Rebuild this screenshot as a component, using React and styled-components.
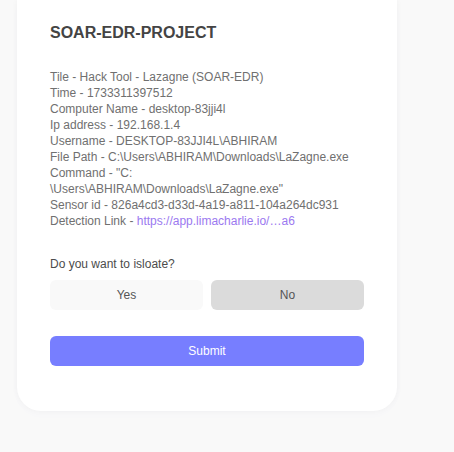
import React, { useState } from "react";
import styled, { createGlobalStyle } from "styled-components";

const GlobalStyle = createGlobalStyle`
  * { box-sizing: border-box; }
  body {
    margin: 0;
    background: #f9f9f9;
    font-family: "Liberation Sans", Arial, sans-serif;
  }
`;

const Page = styled.main`
  padding: 0 57px 41px 17px;
`;

const Card = styled.form`
  max-width: 448px;
  padding: 23px 33px 45px;
  background: #ffffff;
  border-radius: 0 0 24px 24px;
  box-shadow: 0 4px 16px rgba(99, 77, 255, 0.01), 0 0 6px rgba(0, 0, 0, 0.04);
`;

const Title = styled.h1`
  margin: 0 0 26px;
  font-size: 16px;
  line-height: 20px;
  color: #444444;
`;

const Details = styled.div`
  font-size: 12px;
  line-height: 16px;
  color: #707070;
`;

const Detail = styled.p`
  margin: 0;
`;

const DetailLink = styled.a`
  color: #9b79f0;
  text-decoration: none;
`;

const Choice = styled.fieldset`
  min-width: 0;
  margin: 27px 0 26px;
  padding: 0;
  border: 0;
`;

const Question = styled.legend`
  padding: 0;
  margin-bottom: 8px;
  font-size: 12px;
  line-height: 16px;
  color: #4c4c4c;
`;

const Options = styled.div`
  display: grid;
  grid-template-columns: 1fr 1fr;
  gap: 8px;
`;

const Button = styled.button`
  height: 30px;
  padding: 0;
  border: 0;
  border-radius: 6px;
  font: inherit;
  font-size: 12px;
  line-height: 16px;
  cursor: pointer;
`;

const OptionButton = styled(Button)`
  color: #555555;
  background: ${({ $selected }) => ($selected ? "#dbdbdb" : "#f9f9f9")};
`;

const SubmitButton = styled(Button)`
  display: block;
  width: 100%;
  color: #ffffff;
  background: #777eff;
`;

const details = [
  "Tile - Hack Tool - Lazagne (SOAR-EDR)",
  "Time - 1733311397512",
  "Computer Name - desktop-83jji4l",
  "Ip address - 192.168.1.4",
  "Username - DESKTOP-83JJI4L\\ABHIRAM",
  "File Path - C:\\Users\\ABHIRAM\\Downloads\\LaZagne.exe",
  'Command - "C:\u200b\\Users\\ABHIRAM\\Downloads\\LaZagne.exe"',
  "Sensor id - 826a4cd3-d33d-4a19-a811-104a264dc931",
];

export default function App() {
  const [answer, setAnswer] = useState("No");

  return (
    <>
      <GlobalStyle />
      <Page>
        <Card onSubmit={(event) => event.preventDefault()}>
          <Title>SOAR-EDR-PROJECT</Title>
          <Details>
            {details.map((text) => (
              <Detail key={text}>{text}</Detail>
            ))}
            <Detail>
              Detection Link -{" "}
              <DetailLink href="https://app.limacharlie.io/">
                https://app.limacharlie.io/…a6
              </DetailLink>
            </Detail>
          </Details>
          <Choice>
            <Question>Do you want to isloate?</Question>
            <Options>
              {["Yes", "No"].map((option) => (
                <OptionButton
                  key={option}
                  type="button"
                  aria-pressed={answer === option}
                  $selected={answer === option}
                  onClick={() => setAnswer(option)}
                >
                  {option}
                </OptionButton>
              ))}
            </Options>
          </Choice>
          <SubmitButton type="submit">Submit</SubmitButton>
        </Card>
      </Page>
    </>
  );
}
